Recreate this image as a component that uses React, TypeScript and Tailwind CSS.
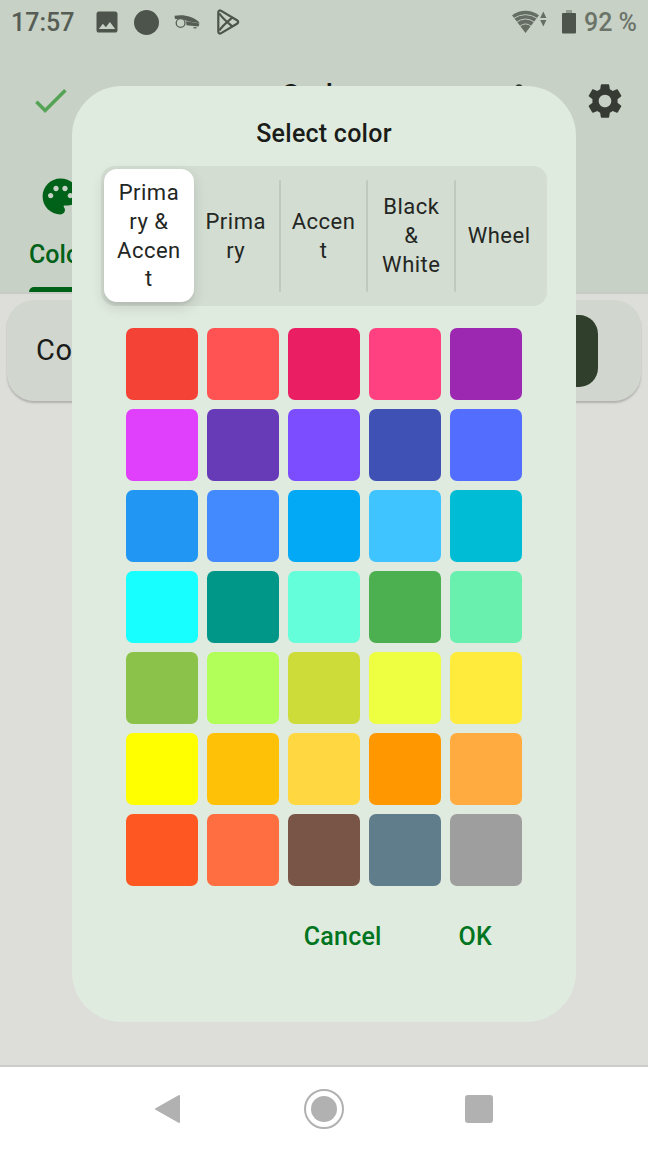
import { MdCheck, MdImage, MdMoreVert, MdPalette, MdSettings } from "react-icons/md";

const swatches = [
  "bg-[#f44336]", "bg-[#ff5252]", "bg-[#e91e63]", "bg-[#ff4081]", "bg-[#9c27b0]",
  "bg-[#e040fb]", "bg-[#673ab7]", "bg-[#7c4dff]", "bg-[#3f51b5]", "bg-[#536dfe]",
  "bg-[#2196f3]", "bg-[#448aff]", "bg-[#03a9f4]", "bg-[#40c4ff]", "bg-[#00bcd4]",
  "bg-[#18ffff]", "bg-[#009688]", "bg-[#64ffda]", "bg-[#4caf50]", "bg-[#69f0ae]",
  "bg-[#8bc34a]", "bg-[#b2ff59]", "bg-[#cddc39]", "bg-[#eeff41]", "bg-[#ffeb3b]",
  "bg-[#ffff00]", "bg-[#ffc107]", "bg-[#ffd740]", "bg-[#ff9800]", "bg-[#ffab40]",
  "bg-[#ff5722]", "bg-[#ff6e40]", "bg-[#795548]", "bg-[#607d8b]", "bg-[#9e9e9e]",
];

const tabs = [
  { lines: ["Prima", "ry &", "Accen", "t"], selected: true, divider: false },
  { lines: ["Prima", "ry"], selected: false, divider: false },
  { lines: ["Accen", "t"], selected: false, divider: true },
  { lines: ["Black", "&", "White"], selected: false, divider: true },
  { lines: ["Wheel"], selected: false, divider: true },
];

function StatusBar() {
  return (
    <div className="flex h-11 items-center pl-[11px] pr-[11px] text-[25px] font-medium leading-none text-[#565d55]">
      <span className="w-[64px] whitespace-nowrap pt-px">17:57</span>
      <MdImage className="ml-[18px] size-7 text-[#4d544c]" />
      <span className="ml-[13px] size-[25px] rounded-full bg-[#4d544c]" />
      <svg className="ml-[15px] h-4 w-7" viewBox="0 0 28 16" fill="none">
        <path d="M0.5 1.8C8 0.2 19 1.6 25.5 8.4L24 9C17 7.8 12 7.2 9 4.9L1 5Z" fill="#565d55" />
        <path d="M12 7.2L25.5 9.6L24.5 12.4L12.5 11.2Z" fill="#565d55" />
        <path d="M19.5 13.6L22.5 13.8" stroke="#565d55" strokeWidth="1.2" />
        <circle cx="6.6" cy="9" r="4.4" fill="#c8d1c5" stroke="#565d55" strokeWidth="1.3" />
      </svg>
      <svg className="ml-[14px] h-[26px] w-6" viewBox="0 0 24 26" fill="none" stroke="#4d544c" strokeWidth="2.2" strokeLinejoin="round">
        <path d="M2.3 3.4C2.3 1.6 3.7 1 5.2 1.9L21 11.3C22.6 12.3 22.6 13.7 21 14.7L5.2 24.1C3.7 25 2.3 24.4 2.3 22.6Z" />
        <path d="M3.4 4.5C6 9 11 13 16.5 17.6M3.4 21.5C6 17 11 13 16.5 8.4" />
      </svg>
      <svg className="ml-auto h-6 w-9" viewBox="0 0 36 24">
        <path d="M0 5.2Q13.5 -3.5 27 5.2L13.5 23Z" fill="#656d64" />
        <path d="M1.5 8.5Q13.5 0.8 25.5 8.5M4 12.5Q13.5 5.5 23 12.5M7.5 16.5Q13.5 11.4 19.5 16.5" fill="none" stroke="#c8d1c5" strokeWidth="0.9" />
        <path d="M28.2 8L31.3 1.5L34.4 8ZM28.2 10L31.3 16.5L34.4 10Z" fill="#656d64" />
      </svg>
      <svg className="ml-[14px] h-6 w-[14px]" viewBox="0 0 14 24">
        <path d="M4 0H10V3H4Z" fill="#949c92" />
        <rect y="3" width="14" height="20.5" rx="1" fill="#4d544c" />
      </svg>
      <span className="ml-[8px] whitespace-nowrap pt-px text-[#6c746a]">92 %</span>
    </div>
  );
}

function ScreenBehind() {
  return (
    <div className="flex h-full flex-col">
      <header className="flex h-[294px] shrink-0 flex-col border-b-2 border-[#c9ccc6] bg-[#c8d1c5]">
        <StatusBar />
        <div className="flex h-[113px] items-center pl-[29px] pr-[22px]">
          <MdCheck className="size-[43px] text-[#55a357]" />
          <span className="mb-[11px] ml-[209px] text-[29px] font-medium leading-none text-[#191c19]">Code</span>
          <MdMoreVert className="ml-auto size-[50px] text-[#363b34]" />
          <MdSettings className="ml-[40px] size-[42px] text-[#363b34]" />
        </div>
        <div className="flex w-24 flex-1 flex-col pl-[29px] pt-[18px] text-[#006119]">
          <MdPalette className="ml-[10px] size-[43px]" />
          <span className="mt-[21px] text-[25px] font-medium leading-[32px]">Color</span>
          <span className="mt-auto h-[5px] w-[62px] rounded-t-[5px] bg-[#006119]" />
        </div>
      </header>
      <main className="flex-1 bg-[#dddeda] px-[7px] pt-[6px]">
        <div className="flex h-[101px] items-center justify-between rounded-[27px] bg-[#d1d7ce] pl-[29px] pr-[43px] shadow-[0_2px_2px_rgba(0,0,0,0.2)]">
          <span className="text-[29px] tracking-[0.6px] text-[#1a1c19]">Color</span>
          <span className="h-[72px] w-[72px] rounded-[19px] bg-[#303e2c]" />
        </div>
      </main>
      <nav className="flex h-[87px] shrink-0 items-center justify-between border-t-2 border-[#cccdca] bg-white px-[154px] pb-[2px] text-[#b1b1b1]">
        <svg className="h-[30px] w-[27px]" viewBox="0 0 27 30">
          <path d="M2 15L25 2V28Z" fill="currentColor" stroke="currentColor" strokeWidth="2" strokeLinejoin="round" />
        </svg>
        <span className="ml-[1px] flex size-10 items-center justify-center rounded-full border-2 border-[#b1b1b1]">
          <span className="size-[26px] rounded-full bg-[#b1b1b1]" />
        </span>
        <span className="mr-[1px] size-[28px] rounded-[3px] bg-[#b1b1b1]" />
      </nav>
    </div>
  );
}

function SegmentedTabs() {
  return (
    <div className="mx-[29px] flex h-[140px] shrink-0 rounded-[14px] bg-[#d3ddd2] pb-1 pl-[3px] pr-1 pt-[3px]">
      {tabs.map((tab) => (
        <div key={tab.lines.join("")} className="flex min-w-0 flex-1 items-center">
          {tab.divider && <span className="-ml-px -mr-px h-[112px] w-[2px] shrink-0 rounded-full bg-[#bfc9bf]" />}
          <button
            className={
              tab.selected
                ? "-mr-[2px] h-full flex-1 rounded-[13px] bg-white pt-[2px] text-[22px] leading-[28.8px] tracking-[0.5px] text-[#232623] shadow-[0_5px_14px_rgba(0,0,0,0.13),0_3px_2px_rgba(0,0,0,0.05)]"
                : "flex-1 pt-[2px] text-[22px] leading-[28.8px] tracking-[0.5px] text-[#232623]"
            }
          >
            {tab.lines.map((line) => (
              <span key={line} className="block">{line}</span>
            ))}
          </button>
        </div>
      ))}
    </div>
  );
}

function ColorDialog() {
  return (
    <section className="absolute left-[72px] top-[86px] flex h-[936px] w-[504px] flex-col rounded-[50px] bg-[#e0ebdf]">
      <h1 className="flex h-[80px] items-center justify-center pt-[16px] text-[25px] font-medium tracking-[0.25px] text-[#1a1c19]">Select color</h1>
      <SegmentedTabs />
      <div className="mt-[21.6px] grid grid-cols-[repeat(5,72px)] justify-center gap-[9px]">
        {swatches.map((color) => (
          <button key={color} className={`h-[72px] rounded-[7px] ${color}`} />
        ))}
      </div>
      <div className="mt-[33px] flex justify-end gap-[77px] pr-[84px] text-[25px] font-medium leading-[36px] tracking-[0.2px] text-[#007521]">
        <button>Cancel</button>
        <button>OK</button>
      </div>
    </section>
  );
}

export default function App() {
  return (
    <div className="relative h-[1152px] w-[648px] overflow-hidden font-['Roboto',sans-serif]">
      <ScreenBehind />
      <ColorDialog />
    </div>
  );
}
